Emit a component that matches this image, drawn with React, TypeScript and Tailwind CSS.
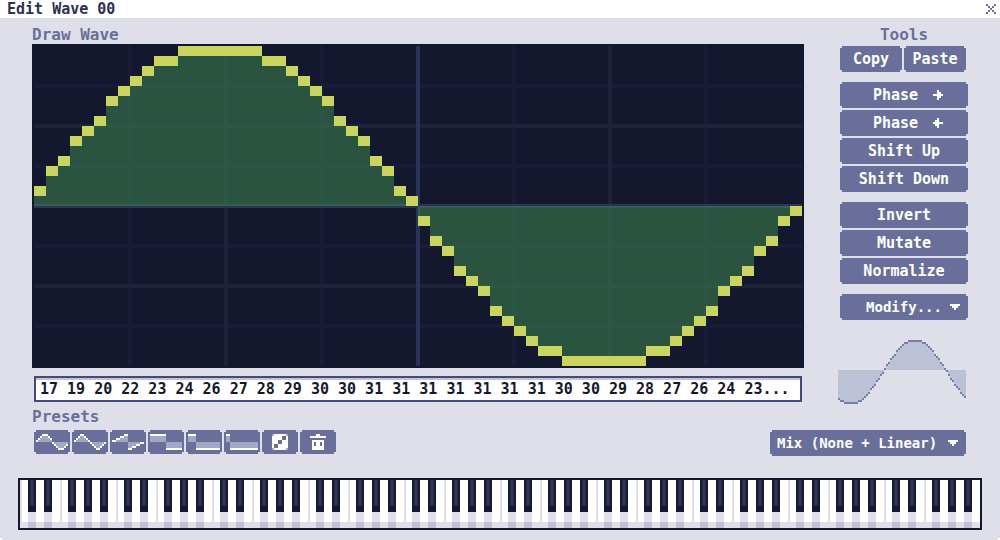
import React, { useState } from "react";

const WAVE = [
  17, 19, 20, 22, 23, 24, 26, 27, 28, 29, 30, 30, 31, 31, 31, 31,
  31, 31, 31, 30, 30, 29, 28, 27, 26, 24, 23, 22, 20, 19, 17, 16,
  14, 12, 11, 9, 8, 7, 5, 4, 3, 2, 1, 1, 0, 0, 0, 0,
  0, 0, 0, 1, 1, 2, 3, 4, 5, 7, 8, 9, 11, 12, 14, 15,
];

const MIXED = WAVE.map((_, i) => WAVE[(i + 41) % 64]);

const NOTCH =
  "[clip-path:polygon(2px_0,calc(100%-2px)_0,calc(100%-2px)_2px,100%_2px,100%_calc(100%-2px),calc(100%-2px)_calc(100%-2px),calc(100%-2px)_100%,2px_100%,2px_calc(100%-2px),0_calc(100%-2px),0_2px,2px_2px)]";

const BUTTON = `bg-[#696f9a] text-white hover:bg-[#7a80aa] ${NOTCH}`;

/* "#" is drawn in the text colour, "+" in a dimmed one, "." is empty. */
function PixelArt({ rows, className = "" }: { rows: string[]; className?: string }) {
  const width = rows[0].length;
  return (
    <svg
      aria-hidden="true"
      width={width * 2}
      height={rows.length * 2}
      viewBox={`0 0 ${width} ${rows.length}`}
      shapeRendering="crispEdges"
      className={`shrink-0 ${className}`}
    >
      {rows.flatMap((row, y) =>
        row.split("").map((cell, x) =>
          cell === "." ? null : (
            <rect
              key={`${x}-${y}`}
              x={x}
              y={y}
              width={1}
              height={1}
              fill={cell === "#" ? "currentColor" : "#a4a7c3"}
            />
          ),
        ),
      )}
    </svg>
  );
}

const CLOSE = ["#...#", ".#.#.", "..#..", ".#.#.", "#...#"];
const ARROW_RIGHT = ["..#..", "..##.", "#####", "..##.", "..#.."];
const ARROW_LEFT = ["..#..", ".##..", "#####", ".##..", "..#.."];
const CARET = ["#####", ".###.", "..#.."];

const PRESETS: { name: string; rows: string[] }[] = [
  {
    name: "Sine",
    rows: [
      "...###..........",
      "..#+++#.........",
      ".#+++++#........",
      "#+++++++........",
      "........#+++++++",
      ".........#+++++#",
      "..........#+++#.",
      "...........###..",
    ],
  },
  {
    name: "Triangle",
    rows: [
      "...##...........",
      "..#++#..........",
      ".#++++#.........",
      "#++++++#........",
      "........#++++++#",
      ".........#++++#.",
      "..........#++#..",
      "...........##...",
    ],
  },
  {
    name: "Sawtooth",
    rows: [
      "......##........",
      "....##++........",
      "..##++++........",
      "##++++++........",
      "........++++++##",
      "........++++##..",
      "........++##....",
      "........##......",
    ],
  },
  {
    name: "Square",
    rows: [
      "########........",
      "++++++++........",
      "++++++++........",
      "++++++++........",
      "........++++++++",
      "........++++++++",
      "........++++++++",
      "........########",
    ],
  },
  {
    name: "Pulse 25%",
    rows: [
      "####............",
      "++++............",
      "++++............",
      "++++............",
      "....++++++++++++",
      "....++++++++++++",
      "....++++++++++++",
      "....############",
    ],
  },
  {
    name: "Pulse 12.5%",
    rows: [
      "##..............",
      "++..............",
      "++..............",
      "++..............",
      "..++++++++++++++",
      "..++++++++++++++",
      "..++++++++++++++",
      "..##############",
    ],
  },
  {
    name: "Random",
    rows: [
      "+######+",
      "#####..#",
      "#####..#",
      "###..###",
      "###..###",
      "#..#####",
      "#..#####",
      "+######+",
    ],
  },
  {
    name: "Clear",
    rows: [
      "...##...",
      "########",
      "........",
      ".######.",
      ".#.##.#.",
      ".#.##.#.",
      ".######.",
      ".######.",
    ],
  },
];

function WaveCanvas() {
  return (
    <svg
      role="img"
      aria-label="Waveform"
      viewBox="0 0 772 324"
      preserveAspectRatio="none"
      shapeRendering="crispEdges"
      className="block h-[324px] w-full bg-[#14182e]"
    >
      {[1, 3, 5, 7].map((n) => (
        <g key={n} fill="#181c36">
          <rect x={n * 96} y={2} width={4} height={320} />
          <rect x={2} y={n * 40} width={768} height={4} />
        </g>
      ))}
      {[2, 6].map((n) => (
        <g key={n} fill="#1e233a">
          <rect x={n * 96} y={2} width={4} height={320} />
          <rect x={2} y={n * 40} width={768} height={4} />
        </g>
      ))}
      <rect x={2} y={160} width={768} height={4} fill="#2c3358" />
      <rect x={384} y={2} width={4} height={320} fill="#2c3358" />
      {WAVE.map((v, i) => {
        const top = 2 + (31 - v) * 10;
        const x = 2 + i * 12;
        const above = v > 15;
        return (
          <g key={i}>
            <rect
              x={x}
              y={above ? top + 10 : 162}
              width={12}
              height={above ? Math.max(0, 152 - top) : top - 162}
              fill="#3c8551"
              fillOpacity={0.55}
            />
            <rect x={x} y={top} width={12} height={10} fill="#c9d55f" />
          </g>
        );
      })}
    </svg>
  );
}

function MixPreview() {
  return (
    <svg
      role="img"
      aria-label="Mixed waveform"
      viewBox="0 0 128 64"
      shapeRendering="crispEdges"
      className="mt-5 block h-16 w-32"
    >
      {MIXED.map((v, i) => {
        const top = (31 - v) * 2;
        return (
          <g key={i}>
            <rect
              x={i * 2}
              y={Math.min(top, 30)}
              width={2}
              height={Math.abs(top - 30)}
              fill="#bdc1d5"
            />
            <rect x={i * 2} y={top} width={2} height={2} fill="#787ea8" />
          </g>
        );
      })}
    </svg>
  );
}

function ToolButton({ children }: { children: React.ReactNode }) {
  return (
    <button
      type="button"
      className={`flex h-[26px] w-full items-center justify-center gap-3 text-[15px] leading-6 ${BUTTON}`}
    >
      {children}
    </button>
  );
}

function DropDown({ label, text, className }: { label: string; text: string; className: string }) {
  return (
    <div className={`relative h-[26px] ${BUTTON}`}>
      <select
        aria-label={label}
        className={`h-full w-full appearance-none bg-transparent text-white outline-none ${className}`}
      >
        <option>{text}</option>
      </select>
      <PixelArt rows={CARET} className="pointer-events-none absolute top-2.5 right-2" />
    </div>
  );
}

const NOTES = ["C", "C#", "D", "D#", "E", "F", "F#", "G", "G#", "A", "A#", "B"];

function Key({ name }: { name: string }) {
  if (name.includes("#")) {
    return (
      <button type="button" aria-label={name} className="flex flex-col bg-[#dedfe8]">
        <span className="block h-8 w-full bg-[#14182e] px-0.5">
          <span className="block h-[26px] bg-[#2c3153]" />
        </span>
        <span className="block h-2.5 w-full" />
        <span className="block h-1.5 w-full bg-[#c1c2d4]" />
      </button>
    );
  }
  const divided = name.startsWith("C") || name.startsWith("F");
  return (
    <button
      type="button"
      aria-label={name}
      className={`border-b-[6px] border-[#dedfe8] bg-white ${divided ? "border-l-2" : ""}`}
    />
  );
}

function Keyboard() {
  return (
    <div className="mx-[18px] mt-[22px] flex h-[52px] border-2 border-[#14182e]">
      {Array.from({ length: 10 }, (_, octave) => (
        <div key={octave} className="grid min-w-0 flex-1 grid-cols-12">
          {NOTES.map((note) => (
            <Key key={note} name={`${note}${octave}`} />
          ))}
        </div>
      ))}
    </div>
  );
}

export default function App() {
  const [values, setValues] = useState(WAVE.slice(0, 27).join(" ") + "...");

  return (
    <div className="flex min-h-screen flex-col bg-white font-['DejaVu_Sans_Mono',monospace] text-sm font-bold">
      <header className="flex h-[18px] items-center justify-between pr-1 pl-[7px]">
        <h1 className="text-[15px] leading-[18px] text-[#2b3054]">Edit Wave 00</h1>
        <button type="button" aria-label="Close" className="text-[#696f9a]">
          <PixelArt rows={CLOSE} />
        </button>
      </header>

      <main className="grow bg-[#dedfe8] pt-2 pb-2.5 [clip-path:polygon(0_0,100%_0,100%_calc(100%-2px),calc(100%-2px)_calc(100%-2px),calc(100%-2px)_100%,2px_100%,2px_calc(100%-2px),0_calc(100%-2px))]">
        <div className="flex gap-[34px] px-8">
          <section className="min-w-0 flex-1">
            <h2 className="text-base leading-[18px] text-[#696f9a]">Draw Wave</h2>
            <WaveCanvas />
            <div className="mt-2 px-0.5">
              <input
                aria-label="Wave values"
                value={values}
                onChange={(e) => setValues(e.target.value)}
                className="block h-[26px] w-full border-2 border-[#454b78] bg-white px-1 text-[15px] text-[#14182e] shadow-[inset_0_2px_0_#c1c4d8] outline-none"
              />
            </div>
          </section>

          <aside className="w-[130px] shrink-0">
            <div className="pl-0.5">
              <h2 className="text-center text-base leading-[18px] text-[#696f9a]">Tools</h2>
              <div className="mt-0.5 flex gap-0.5 pr-0.5">
                <ToolButton>Copy</ToolButton>
                <ToolButton>Paste</ToolButton>
              </div>
              <div className="mt-2.5 flex flex-col gap-0.5">
                <ToolButton>
                  <span className="w-14 pl-2 text-left">Phase</span>
                  <PixelArt rows={ARROW_RIGHT} />
                </ToolButton>
                <ToolButton>
                  <span className="w-14 pl-2 text-left">Phase</span>
                  <PixelArt rows={ARROW_LEFT} />
                </ToolButton>
                <ToolButton>Shift Up</ToolButton>
                <ToolButton>Shift Down</ToolButton>
              </div>
              <div className="mt-2.5 flex flex-col gap-0.5">
                <ToolButton>Invert</ToolButton>
                <ToolButton>Mutate</ToolButton>
                <ToolButton>Normalize</ToolButton>
              </div>
              <div className="mt-2.5">
                <DropDown label="Modify" text="Modify..." className="[text-align-last:center]" />
              </div>
            </div>
            <MixPreview />
          </aside>
        </div>

        <section className="mt-1 px-[34px]">
          <h2 className="-ml-0.5 text-base leading-[18px] text-[#696f9a]">Presets</h2>
          <div className="mt-1 flex items-start justify-between">
            <div className="flex gap-0.5">
              {PRESETS.map(({ name, rows }) => (
                <button
                  key={name}
                  type="button"
                  aria-label={name}
                  className={`flex h-6 w-9 items-center justify-center ${BUTTON}`}
                >
                  <PixelArt rows={rows} />
                </button>
              ))}
            </div>
            <div className="w-[196px]">
              <DropDown label="Mix mode" text="Mix (None + Linear)" className="pl-[7px]" />
            </div>
          </div>
        </section>

        <Keyboard />
      </main>
    </div>
  );
}
